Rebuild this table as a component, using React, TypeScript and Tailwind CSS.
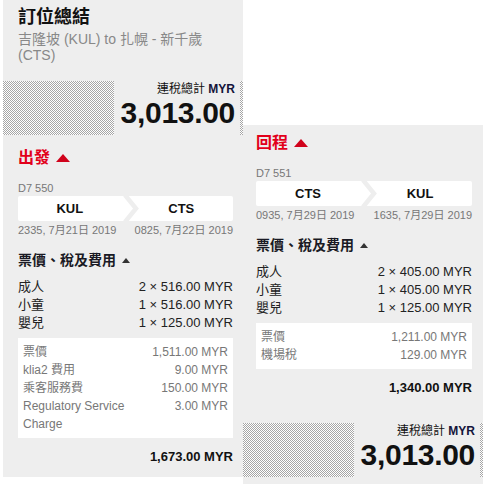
import React from 'react'

const font = { fontFamily: '"Liberation Sans", Arial, "Noto Sans CJK TC", sans-serif' }

const hatch =
    'bg-[repeating-linear-gradient(45deg,#a6a6a6_0px,#a6a6a6_0.7071px,#ffffff_0.7071px,#ffffff_1.4142px)]'

type Line = { label: string; value: string }

type Leg = {
    title: string
    flight: string
    from: string
    to: string
    depart: string
    arrive: string
    pax: Line[]
    fees: Line[]
    total: string
}

const outbound: Leg = {
    title: '出發',
    flight: 'D7 550',
    from: 'KUL',
    to: 'CTS',
    depart: '2335, 7月21日 2019',
    arrive: '0825, 7月22日 2019',
    pax: [
        { label: '成人', value: '2 × 516.00 MYR' },
        { label: '小童', value: '1 × 516.00 MYR' },
        { label: '嬰兒', value: '1 × 125.00 MYR' },
    ],
    fees: [
        { label: '票價', value: '1,511.00 MYR' },
        { label: 'klia2 費用', value: '9.00 MYR' },
        { label: '乘客服務費', value: '150.00 MYR' },
        { label: 'Regulatory Service Charge', value: '3.00 MYR' },
    ],
    total: '1,673.00 MYR',
}

const inbound: Leg = {
    title: '回程',
    flight: 'D7 551',
    from: 'CTS',
    to: 'KUL',
    depart: '0935, 7月29日 2019',
    arrive: '1635, 7月29日 2019',
    pax: [
        { label: '成人', value: '2 × 405.00 MYR' },
        { label: '小童', value: '1 × 405.00 MYR' },
        { label: '嬰兒', value: '1 × 125.00 MYR' },
    ],
    fees: [
        { label: '票價', value: '1,211.00 MYR' },
        { label: '機場稅', value: '129.00 MYR' },
    ],
    total: '1,340.00 MYR',
}

function GrandTotal() {
    return (
        <div className={`flex justify-end h-[54px] ${hatch}`}>
            <div className="w-[126px] mr-[3px] bg-[#eeeeee] flex flex-col items-end pt-[1px] pr-[5px]">
                <div className="text-[12px] leading-[14px] text-[#111]">
                    連稅總計 <span className="font-bold text-[#14143a]">MYR</span>
                </div>
                <div className="text-[30px] leading-[34px] font-bold text-[#111] tracking-[-0.3px]">
                    3,013.00
                </div>
            </div>
        </div>
    )
}

function LegSection({ leg }: { leg: Leg }) {
    return (
        <div className="pt-[8px]">
            <div className="flex items-center gap-[6px] h-[20px]">
                <span className="text-[16px] leading-[20px] font-bold text-[#e2001a]">{leg.title}</span>
                <svg width="14" height="8" viewBox="0 0 14 8">
                    <path d="M7 0 L14 8 L0 8 Z" fill="#d0021b" />
                </svg>
            </div>

            <div className="mt-[13px] text-[11px] leading-[14px] text-[#777]">{leg.flight}</div>

            <div className="relative mt-[1px] flex h-[25px] bg-white rounded-[2px] text-[13px] font-bold text-[#111]">
                <div className="flex-1 flex items-center justify-center">{leg.from}</div>
                <div className="flex-1 flex items-center justify-center pl-[8px]">{leg.to}</div>
                <svg className="absolute left-[103px] top-0" width="18" height="25" viewBox="0 0 18 25">
                    <path d="M4 -1 L15 12.5 L4 26" stroke="#eeeeee" strokeWidth="4.5" fill="none" />
                </svg>
            </div>

            <div className="mt-[2px] flex justify-between text-[11px] leading-[14px] text-[#777]">
                <span>{leg.depart}</span>
                <span>{leg.arrive}</span>
            </div>

            <div className="mt-[13px] flex items-center gap-[6px] h-[20px]">
                <span className="text-[14px] leading-[20px] font-bold text-[#1a1a24]">票價、稅及費用</span>
                <svg width="8" height="5" viewBox="0 0 8 5">
                    <path d="M4 0 L8 5 L0 5 Z" fill="#333" />
                </svg>
            </div>

            <div className="mt-[8px] text-[13px] leading-[18px] text-[#222]">
                {leg.pax.map((p) => (
                    <div key={p.label} className="flex justify-between">
                        <span>{p.label}</span>
                        <span>{p.value}</span>
                    </div>
                ))}
            </div>

            <div className="mt-[6px] bg-white px-[5px] py-[5px] text-[12px] leading-[18px] text-[#777]">
                {leg.fees.map((f) => (
                    <div key={f.label} className="flex justify-between items-start">
                        <span className="w-[58%]">{f.label}</span>
                        <span className="text-right">{f.value}</span>
                    </div>
                ))}
            </div>

            <div className="mt-[11px] text-right text-[13px] leading-[16px] font-bold text-[#111]">{leg.total}</div>
        </div>
    )
}

export default function App() {
    return (
        <div className="w-[485px] h-[484px] overflow-hidden bg-white flex items-start pl-[3px]" style={font}>
            <div className="w-[240px] bg-[#eeeeee] pb-[12px]">
                <div className="pl-[15px] pr-[10px] pt-[5px]">
                    <h1 className="text-[18px] leading-[24px] font-bold text-[#111]">訂位總結</h1>
                    <p className="mt-[2px] text-[14px] leading-[16px] text-[#888]">
                        吉隆坡 (KUL) to 扎幌 - 新千歲 (CTS)
                    </p>
                </div>
                <div className="mt-[18px]">
                    <GrandTotal />
                </div>
                <div className="pl-[15px] pr-[10px] mt-[5px]">
                    <LegSection leg={outbound} />
                </div>
            </div>

            <div className="w-[240px] mt-[125px] bg-[#eeeeee] pb-[20px]">
                <div className="pl-[13px] pr-[11px]">
                    <LegSection leg={inbound} />
                </div>
                <div className="mt-[27px]">
                    <GrandTotal />
                </div>
            </div>
        </div>
    )
}
